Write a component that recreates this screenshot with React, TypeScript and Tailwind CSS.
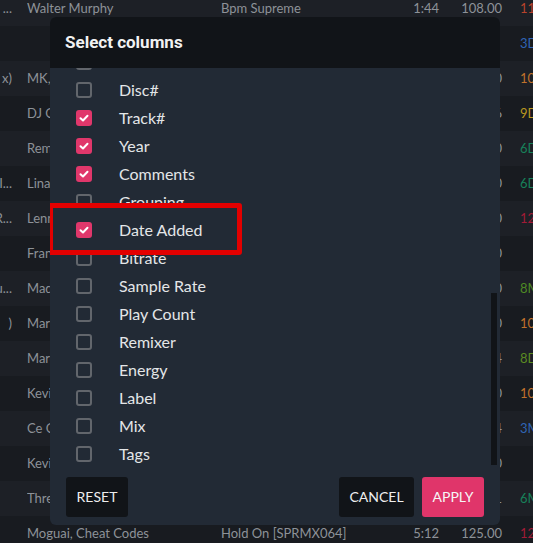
import React from 'react';

type Row = {
  lead?: string;
  artist?: string;
  title?: string;
  time?: string;
  bpm?: string;
  key?: string;
  keyColor?: string;
};

const rows: Row[] = [
  { lead: 't ...', artist: 'Walter Murphy', title: 'Bpm Supreme', time: '1:44', bpm: '108.00', key: '11A', keyColor: 'text-[#b8432c]' },
  { key: '3D', keyColor: 'text-[#2f64b3]' },
  { lead: 'x)', artist: 'MK, Dom Dolla', bpm: '124.00', key: '10A', keyColor: 'text-[#c0722b]' },
  { artist: 'DJ Quik', bpm: '96.56', key: '9D', keyColor: 'text-[#b8971f]' },
  { artist: 'Remady', bpm: '128.00', key: '6D', keyColor: 'text-[#17805a]' },
  { lead: 'r I...', artist: 'Lina Morgana', bpm: '120.00', key: '6D', keyColor: 'text-[#17805a]' },
  { lead: 'R...', artist: 'Lenny Kravitz', bpm: '100.00', key: '12A', keyColor: 'text-[#a11b37]' },
  { artist: 'Franky Rizardo', bpm: '124.00' },
  { lead: 'u...', artist: 'Madonna', bpm: '120.00', key: '8M', keyColor: 'text-[#4e8a24]' },
  { lead: ')', artist: 'Martin Garrix', bpm: '126.00', key: '10A', keyColor: 'text-[#c0722b]' },
  { artist: 'Marc Benjamin', bpm: '122.44', key: '8D', keyColor: 'text-[#5b8a22]' },
  { artist: 'Kevin McKay', bpm: '124.00', key: '10A', keyColor: 'text-[#c0722b]' },
  { artist: 'Ce Cile', bpm: '126.14', key: '3M', keyColor: 'text-[#2f64b3]' },
  { artist: 'Kevin Lyttle', bpm: '96.00' },
  { artist: 'Three Drives', bpm: '128.01', key: '6M', keyColor: 'text-[#17805a]' },
  { artist: 'Moguai, Cheat Codes', title: 'Hold On [SPRMX064]', time: '5:12', bpm: '125.00', key: '12A', keyColor: 'text-[#a11b37]' },
];

const columns: { label: string; checked: boolean }[] = [
  { label: 'Album', checked: false },
  { label: 'Disc#', checked: false },
  { label: 'Track#', checked: true },
  { label: 'Year', checked: true },
  { label: 'Comments', checked: true },
  { label: 'Grouping', checked: false },
  { label: 'Date Added', checked: true },
  { label: 'Bitrate', checked: false },
  { label: 'Sample Rate', checked: false },
  { label: 'Play Count', checked: false },
  { label: 'Remixer', checked: false },
  { label: 'Energy', checked: false },
  { label: 'Label', checked: false },
  { label: 'Mix', checked: false },
  { label: 'Tags', checked: false },
];

function Checkbox({ checked }: { checked: boolean }) {
  if (checked) {
    return (
      <span className="flex h-4 w-4 items-center justify-center rounded-[3px] bg-[#e0376b]">
        <svg width="12" height="12" viewBox="0 0 12 12" fill="none">
          <path d="M2.5 6.2 L5 8.5 L9.5 3.8" stroke="white" strokeWidth="2" strokeLinecap="round" strokeLinejoin="round" />
        </svg>
      </span>
    );
  }
  return <span className="block h-4 w-4 rounded-[3px] border-2 border-[#62666c]" />;
}

function ColumnRow({ label, checked }: { label: string; checked: boolean }) {
  const highlighted = label === 'Date Added';
  return (
    <div className={`flex h-[28px] items-center ${highlighted ? 'relative' : ''}`}>
      {highlighted && (
        <div className="absolute left-[-2px] top-[-13px] h-[52px] w-[194px] rounded-[3px] border-[5px] border-[#e30000] bg-[#222a35]" />
      )}
      <div className={`flex items-center ${highlighted ? 'relative z-10' : ''}`}>
        <div className="ml-[26px] w-[43px] shrink-0">
          <Checkbox checked={checked} />
        </div>
        <span className="text-[16px] text-[#e4e6e8]">{label}</span>
      </div>
    </div>
  );
}

export default function App() {
  return (
    <div className="relative h-[543px] w-[533px] overflow-hidden bg-[#1a1d22] font-['Lato',sans-serif]">
      <div className="-mt-[9px]">
        {rows.map((r, i) => (
          <div
            key={i}
            className={`flex h-[35px] items-center whitespace-nowrap text-[13px] text-[#8d9298] ${i % 2 === 0 ? 'bg-[#1d2026]' : 'bg-[#181b20]'}`}
          >
            <div className="flex w-[12px] shrink-0 justify-end overflow-hidden">{r.lead}</div>
            <div className="ml-[15px] w-[194px] shrink-0 overflow-hidden">{r.artist}</div>
            <div className="w-[170px] shrink-0 overflow-hidden">{r.title}</div>
            <div className="w-[48px] shrink-0 text-right">{r.time}</div>
            <div className="w-[63px] shrink-0 text-right">{r.bpm}</div>
            <div className={`ml-[18px] shrink-0 ${r.keyColor ?? ''}`}>{r.key}</div>
          </div>
        ))}
      </div>

      <div className="absolute left-[50px] top-[17px] flex h-[508px] w-[450px] flex-col overflow-hidden rounded-[6px] bg-[#222a35]">
        <div className="flex h-[51px] shrink-0 items-center bg-[#111418] px-[15px]">
          <h2 className="font-['Roboto',sans-serif] text-[17px] font-bold text-[#f2f2f2]">Select columns</h2>
        </div>

        <div className="relative h-[399px] shrink-0 overflow-hidden">
          <div className="-mt-[20px]">
            {columns.map((c) => (
              <ColumnRow key={c.label} label={c.label} checked={c.checked} />
            ))}
          </div>
          <div className="absolute right-[3px] top-[225px] h-[172px] w-[6px] bg-[#111418]" />
        </div>

        <div className="flex items-start justify-between px-4 pb-[8px] pt-[10px]">
          <button className="h-10 w-[62px] rounded-[3px] bg-[#111418] text-[14px] leading-none text-[#eeeeee]">RESET</button>
          <div className="flex gap-2">
            <button className="h-10 w-[75px] rounded-[3px] bg-[#111418] text-[14px] leading-none text-[#eeeeee]">CANCEL</button>
            <button className="h-10 w-[62px] rounded-[3px] bg-[#e0356a] text-[14px] leading-none text-[#f6f6f6]">APPLY</button>
          </div>
        </div>
      </div>
    </div>
  );
}
